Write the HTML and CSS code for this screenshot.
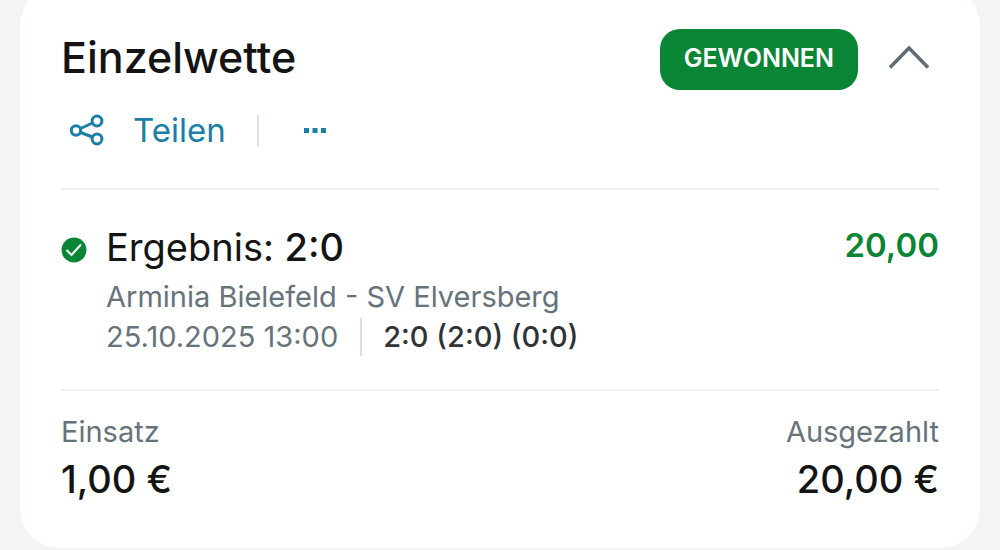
FILE: index.html
```html
<!DOCTYPE html>
<html lang="de">
<head>
<meta charset="utf-8">
<title>Einzelwette</title>
<link rel="stylesheet" href="styles.css">
</head>
<body>
<main class="card">
  <header class="head">
    <h1 class="title">Einzelwette</h1>
    <span class="badge">GEWONNEN</span>
    <button class="toggle" type="button" aria-label="Einklappen">
      <svg width="42" height="26" viewBox="0 0 42 26" fill="none" stroke="#5f6c74" stroke-width="3.500"><path d="M2 23.500 21 4 40 23.500"/></svg>
    </button>
  </header>
  <div class="actions">
    <button class="share" type="button">
      <svg width="34" height="32" viewBox="0 0 34 32" fill="none" stroke="#1b7ea6" stroke-width="3"><circle cx="6" cy="16.500" r="4.700"/><circle cx="27" cy="7" r="4.900"/><circle cx="27" cy="25" r="4.900"/><path d="M10.500 14.500 22.500 9M10.500 18.500l12 4.500"/></svg>
      <span>Teilen</span>
    </button>
    <span class="bar"></span>
    <button class="more" type="button" aria-label="Mehr">
      <svg width="24" height="8" viewBox="0 0 24 8" fill="#1b7ea6"><path d="M0 2h5v5H0zM8.500 2h5v5h-5zM17 2h5v5h-5z"/></svg>
    </button>
  </div>
  <section class="bet">
    <svg class="check" width="26" height="26" viewBox="0 0 26 26" fill="none"><circle cx="13" cy="13" r="12.500" fill="#0a8535"/><path d="M5.500 13 10.500 18 20 7.500" stroke="#fff" stroke-width="2"/></svg>
    <div class="info">
      <h2 class="pick">Ergebnis: <b>2:0</b></h2>
      <p class="match">Arminia Bielefeld - SV Elversberg</p>
      <p class="meta"><time>25.10.2025 13:00</time><span class="score">2:0 (2:0) (0:0)</span></p>
    </div>
    <span class="odds">20,00</span>
  </section>
  <dl class="totals">
    <div><dt>Einsatz</dt><dd>1,00 €</dd></div>
    <div class="paid"><dt>Ausgezahlt</dt><dd>20,00 €</dd></div>
  </dl>
</main>
</body>
</html>
```
FILE: styles.css
```css
* { box-sizing: border-box; }
html { background: #f3f5f5; }
body { margin: -14px 0 0; padding: 0 20px; color: #141414; font-family: Inter, "Liberation Sans", sans-serif; }
h1, h2, p, dl, dd { margin: 0; }
button { border: 0; padding: 0; background: none; font: inherit; color: inherit; display: flex; align-items: center; }
svg { display: block; flex: none; }
.card { background: #fff; border-radius: 40px; padding: 43px 41px 44px; }
.head { display: flex; align-items: flex-start; }
.title { flex: 1; font-size: 43px; line-height: 56px; font-weight: 500; }
.badge { background: #0a8535; color: #fff; border-radius: 20px; padding: 0 24px 2px; font-size: 25px; line-height: 59px; font-weight: 600; }
.toggle { margin: 15px 9px 0 30px; }
.actions { display: flex; align-items: center; height: 100px; padding: 0 9px 18px; border-bottom: 2px solid #eff1f1; color: #1b7ea6; }
.share { gap: 29px; font-size: 33px; line-height: 40px; }
.bar { width: 2px; height: 31px; margin: 0 45px 0 31px; background: #dcdfe1; }
.bet { display: flex; align-items: flex-start; padding: 33px 0 32px; border-bottom: 2px solid #eff1f1; }
.check { margin: 14px 19px 0 0; }
.info { flex: 1; }
.pick { font-size: 38px; line-height: 48px; font-weight: 400; }
.pick b { font-weight: 500; }
.match, .meta { font-size: 29px; line-height: 40px; color: #66737b; }
.match { padding-top: 6px; }
.meta { display: flex; align-items: center; }
.score { margin-left: 22px; padding-left: 21px; border-left: 2px solid #dcdfe1; line-height: 38px; color: #303336; font-weight: 500; }
.odds { color: #0a8535; font-size: 33px; line-height: 44px; font-weight: 600; }
.totals { display: flex; justify-content: space-between; padding-top: 19px; }
.totals dt { font-size: 29px; line-height: 44px; color: #66737b; }
.totals dd { font-size: 38px; line-height: 50px; font-weight: 500; }
.paid { text-align: right; }
```
